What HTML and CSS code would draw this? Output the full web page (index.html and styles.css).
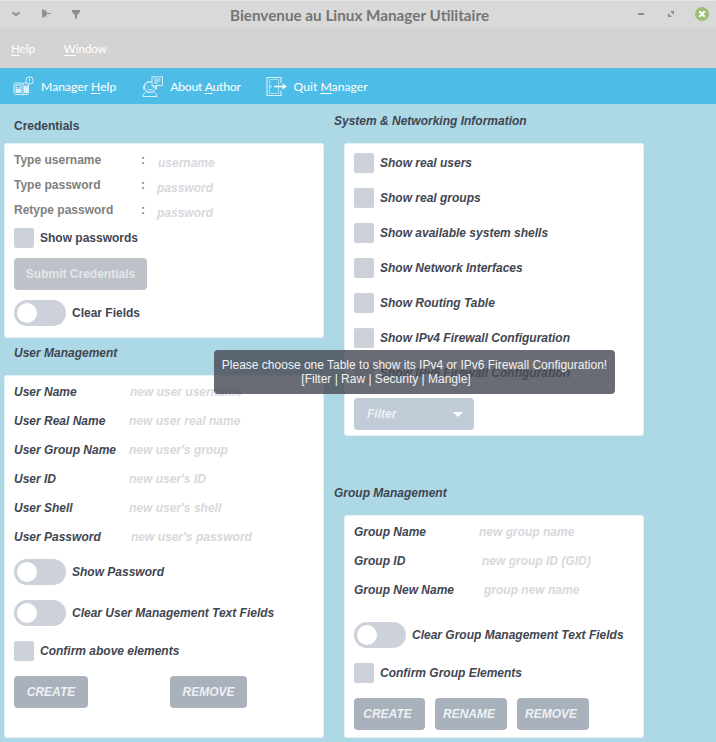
FILE: index.html
```html
<!DOCTYPE html>
<html lang="fr">
<head>
<meta charset="utf-8">
<title>Bienvenue au Linux Manager Utilitaire</title>
<link rel="stylesheet" href="styles.css">
</head>
<body>
<header class="titlebar">
  <div class="wm-left">
    <svg class="wm" viewBox="0 0 12 12"><path d="M2.500 4.500 6 7 9.500 4.500" fill="none" stroke="#8e8e8e" stroke-width="2"/></svg>
    <svg class="wm" viewBox="0 0 12 12"><path d="M2 1.500h1.500l.5 1h2l.5-1v3.500h4.500v1H6.500v3.500L6 8.500H4l-.5 1H2z" fill="#8e8e8e"/></svg>
    <svg class="wm" viewBox="0 0 12 12"><path d="M2 2h8v2.500H8.500V6.500H7V10.500H5V6.500H3.500V4.500H2z" fill="#8e8e8e"/></svg>
  </div>
  <div class="title">Bienvenue au Linux Manager Utilitaire</div>
  <div class="wm-right">
    <svg class="wm" viewBox="0 0 12 12"><rect x="3" y="5" width="6" height="2" fill="#8e8e8e"/></svg>
    <svg class="wm" viewBox="0 0 12 12"><path d="M5 3h4v4zM3 5l4 4H3z" fill="#8e8e8e"/></svg>
    <span class="close"><svg viewBox="0 0 14 14"><path d="M4.300 4.300 9.700 9.700M9.700 4.300 4.300 9.700" stroke="#fff" stroke-width="2"/></svg></span>
  </div>
</header>
<nav class="menubar"><span><u>H</u>elp</span><span><u>W</u>indow</span></nav>
<nav class="toolbar">
  <div class="tool">
    <svg class="ticon" viewBox="0 0 21 21" fill="none" stroke="#d8f0fa" stroke-width="1"><path d="M1 8.500c0-1 .6-1.500 1.500-1.500H9l1 1 1-1h3.500v0c.8 0 1 .5 1 1.500V17c0 1-.5 1.500-1.500 1.500H10l-.5 1-.5-1H2.500C1.500 18.500 1 18 1 17z"/><path d="M10 8v10.500"/><rect x="3" y="9" width="5" height="3"/><rect x="3" y="13.500" width="5" height="3" fill="#d8f0fa"/><rect x="11.500" y="10" width="3" height="6.500" fill="#d8f0fa"/><circle cx="16.500" cy="4.500" r="3.700" fill="#4dbde8"/><path d="M16.500 2.500v2.600M16.500 5.800v.9"/></svg>
    <span>Manager <u>H</u>elp</span>
  </div>
  <div class="tool tool-about">
    <svg class="ticon" viewBox="0 0 21 21" fill="none" stroke="#d8f0fa" stroke-width="1"><circle cx="8" cy="11" r="5.500"/><path d="M2.500 10H1.500v3h1.500M13.500 10h1v3h-1.500M5.500 13c1.500 1.300 3.500 1.300 5 0M6 10v.8M10 10v.8M1 20.500c.3-2.800 2-4.500 3.500-4.800 2 1 5 1 7 0 1.500.3 3.200 2 3.500 4.800zM2.500 9C4 5.500 6 6 8 6.500"/><path d="M10 .8h10.500v8.700h-6.500l-2.500 2v-2h-1.500z" fill="#4dbde8"/><path d="M12 3h6.500M12 5h6.500M12 7h4"/></svg>
    <span>About <u>A</u>uthor</span>
  </div>
  <div class="tool">
    <svg class="ticon" viewBox="0 0 21 21" fill="none" stroke="#d8f0fa" stroke-width="1.100"><path d="M15 7V1.500H1v18h14v-5"/><path d="M3.500 3.500v14h9V3.500z" opacity=".6"/><path d="M5 9.500v2"/><path d="M8 10.500h10" stroke="#fff" stroke-width="1.500"/><path d="M16.500 7.500l4.500 3-4.500 3z" fill="#fff" stroke="none"/></svg>
    <span>Quit <u>M</u>anager</span>
  </div>
</nav>
<main class="content">
  <section class="col col-left">
    <h2 class="heading plain">Credentials</h2>
    <div class="card cred">
      <div class="cred-row"><label>Type username</label><b>:</b><em class="ph first">username</em></div>
      <div class="cred-row"><label>Type password</label><b>:</b><em class="ph">password</em></div>
      <div class="cred-row"><label>Retype password</label><b>:</b><em class="ph">password</em></div>
      <div class="check plain show-pw"><i class="box"></i><span>Show passwords</span></div>
      <button class="submit">Submit Credentials</button>
      <div class="switch-row plain clear-f"><i class="switch"></i><span>Clear Fields</span></div>
    </div>
    <h2 class="heading um">User Management</h2>
    <div class="card user">
      <div class="field"><label>User Name</label><em class="ph">new user username</em></div>
      <div class="field"><label>User Real Name</label><em class="ph">new user real name</em></div>
      <div class="field"><label>User Group Name</label><em class="ph">new user's group</em></div>
      <div class="field"><label>User ID</label><em class="ph">new user's ID</em></div>
      <div class="field"><label>User Shell</label><em class="ph">new user's shell</em></div>
      <div class="field"><label>User Password</label><em class="ph">new user's password</em></div>
      <div class="switch-row s1"><i class="switch"></i><span>Show Password</span></div>
      <div class="switch-row s2"><i class="switch"></i><span>Clear User Management Text Fields</span></div>
      <div class="check c1"><i class="box"></i><span>Confirm above elements</span></div>
      <div class="btns spread"><button class="act">CREATE</button><button class="act wide">REMOVE</button></div>
    </div>
  </section>
  <section class="col col-right">
    <h2 class="heading sys">System &amp; Networking Information</h2>
    <div class="card info">
      <div class="check"><i class="box"></i><span>Show real users</span></div>
      <div class="check"><i class="box"></i><span>Show real groups</span></div>
      <div class="check"><i class="box"></i><span>Show available system shells</span></div>
      <div class="check"><i class="box"></i><span>Show Network Interfaces</span></div>
      <div class="check"><i class="box"></i><span>Show Routing Table</span></div>
      <div class="check"><i class="box"></i><span>Show IPv4 Firewall Configuration</span></div>
      <div class="check"><i class="box"></i><span>Show IPv6 Firewall Configuration</span></div>
      <div class="filter"><span>Filter</span><i class="caret"></i></div>
    </div>
    <h2 class="heading gm">Group Management</h2>
    <div class="card group">
      <div class="field g"><label>Group Name</label><em class="ph">new group name</em></div>
      <div class="field g"><label>Group ID</label><em class="ph">new group ID (GID)</em></div>
      <div class="field g"><label>Group New Name</label><em class="ph">group new name</em></div>
      <div class="switch-row s3"><i class="switch"></i><span>Clear Group Management Text Fields</span></div>
      <div class="check c2"><i class="box"></i><span>Confirm Group Elements</span></div>
      <div class="btns"><button class="act">CREATE</button><button class="act">RENAME</button><button class="act">REMOVE</button></div>
    </div>
  </section>
</main>
<div class="tooltip">Please choose one Table to show its IPv4 or IPv6 Firewall Configuration!<br><span class="tip2">[Filter | Raw | Security | Mangle]</span></div>
</body>
</html>
```

FILE: styles.css
```css
* { box-sizing: border-box; }
html, body { margin: 0; height: 742px; overflow: hidden; }
body { background: #add8e6; font-family: "Liberation Sans", Arial, sans-serif; position: relative; }
u { text-underline-offset: 2px; }

.titlebar { height: 28px; background: #d9d9d9; border-top: 1px solid #e8e8e8; display: flex; align-items: center; justify-content: space-between; padding: 0 7px 1px 10px; position: relative; }
.title { position: absolute; left: 230px; top: 5px; font: 700 15.250px/18px Lato, sans-serif; color: #757575; white-space: nowrap; }
.wm-left { display: flex; gap: 18px; }
.wm-right { display: flex; gap: 18px; align-items: center; }
.wm { width: 12px; height: 12px; display: block; }
.close { width: 14px; height: 14px; border-radius: 50%; background: #9bbf73; display: block; }
.close svg { display: block; width: 14px; height: 14px; }

.menubar { height: 40px; background: #d3d3d3; display: flex; gap: 29px; align-items: center; padding-left: 11px; font: 400 11.500px Lato, sans-serif; color: #fff; }
.toolbar { height: 36px; background: #4dbde8; display: flex; align-items: center; padding-left: 13px; gap: 25px; font: 400 12.200px Lato, sans-serif; color: #fff; }
.tool { display: flex; align-items: center; gap: 7px; }
.tool:first-child { margin-right: 1px; }
.tool-about span { letter-spacing: -0.25px; }
.ticon { width: 21px; height: 21px; display: block; }

.content { display: grid; grid-template-columns: 320px 300px; column-gap: 20px; padding-left: 4px; }
.col { display: flex; flex-direction: column; align-items: stretch; }
.heading { margin: 0; font-size: 12px; line-height: 15px; font-weight: 700; font-style: italic; color: #3f4652; padding-left: 10px; }
.heading.plain { font-style: normal; margin-top: 15px; margin-bottom: 9px; }
.heading.um { margin: 8px 0 14px; }
.heading.sys { margin: 10px 0 14px -10px; padding-left: 0; }
.heading.gm { margin: 50px 0 14px -10px; padding-left: 0; }
.card { background: #fff; border-radius: 4px; box-shadow: inset 0 0 0 1px #e4f2f7; }

.ph { font-size: 12px; font-style: italic; font-weight: 700; color: #d8d8dc; white-space: nowrap; }
.cred { height: 195px; padding: 10px 10px 0; }
.cred-row { height: 25px; display: flex; align-items: flex-start; font-size: 12px; font-weight: 700; color: #808080; }
.cred-row label { width: 127px; line-height: 15px; }
.cred-row b { width: 16px; line-height: 15px; color: #808080; }
.cred-row .ph { line-height: 15px; margin-top: 3px; }
.cred-row .first { margin-left: 1px; }

.box { width: 20px; height: 20px; border-radius: 2px; background: #ccd1da; display: block; flex: none; }
.check, .switch-row { display: flex; align-items: center; font-size: 12px; font-weight: 700; font-style: italic; color: #3f4652; white-space: nowrap; }
.plain { font-style: normal; }
.check { gap: 6px; }
.switch-row { gap: 6px; }
.show-pw { height: 20px; }
.submit { display: block; width: 133px; height: 32px; margin-top: 10px; border: 0; border-radius: 4px; background: #bdc2c9; color: #e4e6e9; font: 700 12px "Liberation Sans", sans-serif; padding: 0; }
.clear-f { margin-top: 10px; }
.switch { width: 52px; height: 26px; border-radius: 13px; background: #ccd1da; display: block; position: relative; flex: none; }
.switch::before { content: ""; position: absolute; left: 3px; top: 3px; width: 20px; height: 20px; border-radius: 50%; background: #fff; }

.user { height: 363px; padding: 2px 10px 0; }
.field { height: 29px; display: flex; align-items: center; font-size: 12px; font-weight: 700; font-style: italic; color: #3f4652; }
.field label { white-space: nowrap; }
.user .field:nth-child(1) label { width: 116px; }
.user .field:nth-child(2) label { width: 115px; }
.user .field:nth-child(3) label { width: 115px; }
.user .field:nth-child(4) label { width: 115px; }
.user .field:nth-child(5) label { width: 115px; }
.user .field:nth-child(6) label { width: 117px; }
.s1 { margin-top: 8px; }
.s2 { margin-top: 15px; }
.c1 { margin-top: 15px; }
.btns { display: flex; gap: 10px; margin-top: 15px; }
.btns.spread { gap: 82px; }
.act { width: 72px; height: 32px; border: 0; border-radius: 4px; background: #a9b1bc; color: #eef0f3; font: italic 700 12px "Liberation Sans", sans-serif; padding: 0 12px 0 8px; }
.act:first-child { width: 71px; }
.spread .act { width: 74px; padding: 0; }
.spread .wide { width: 77px; }

.info { height: 293px; padding: 10px 10px 0; display: flex; flex-direction: column; gap: 15px; }
.filter { width: 120px; height: 32px; border-radius: 4px; background: #c2ccd8; display: flex; align-items: center; justify-content: space-between; padding: 0 11px 0 13px; color: #eef1f5; font-size: 12px; font-weight: 700; font-style: italic; }
.caret { width: 0; height: 0; border-left: 5px solid transparent; border-right: 5px solid transparent; border-top: 5px solid #fff; }

.group { height: 223px; padding: 2px 10px 0; }
.field.g:nth-child(1) label { width: 125px; }
.field.g:nth-child(2) label { width: 128px; }
.field.g:nth-child(3) label { width: 130px; }
.s3 { margin-top: 18px; }
.c2 { margin-top: 15px; }

.tooltip { position: absolute; left: 214px; top: 350px; width: 401px; height: 44px; border-radius: 4px; background: rgba(72, 76, 86, 0.82); color: #f2f2f2; font-size: 12px; line-height: 14px; text-align: center; padding-top: 8px; white-space: nowrap; }
.tip2 { display: inline-block; margin-right: 57px; }
```
